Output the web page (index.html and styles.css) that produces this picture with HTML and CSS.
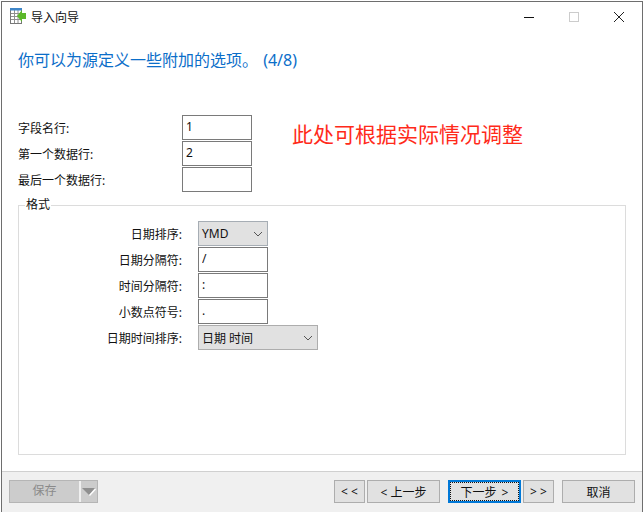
FILE: index.html
```html
<!DOCTYPE html>
<html lang="zh">
<head>
    <meta charset="UTF-8">
    <meta name="viewport" content="width=device-width, initial-scale=1.0">
    <title>导入向导</title>
    <link rel="stylesheet" href="styles.css">
</head>
<body>
    <div class="window">
        <div class="titlebar">
            <svg class="app-icon" width="17" height="17" viewBox="0 0 17 17">
                <rect x="0.5" y="0.5" width="11" height="15" fill="#fff" stroke="#777"/>
                <path d="M1 5.500H11M1 8.500H11M1 11.500H11M4.500 2V15M8 2V15" stroke="#8f8f8f" fill="none"/>
                <path d="M0 0H12V2.500H0Z" fill="#3f86c8"/>
                <path d="M7 8L12 2V5H16V11H12V14Z" fill="#5cb82a"/>
            </svg>
            <span class="title-text">导入向导</span>
            <div class="window-controls">
                <svg width="10" height="10" viewBox="0 0 10 10"><path d="M0 5.500H10" stroke="#111"/></svg>
                <svg width="10" height="10" viewBox="0 0 10 10"><rect x="0.500" y="0.500" width="9" height="9" fill="none" stroke="#ccc"/></svg>
                <svg width="10" height="10" viewBox="0 0 10 10"><path d="M0 0L10 10M10 0L0 10" stroke="#222"/></svg>
            </div>
        </div>

        <div class="content">
            <h1 class="heading">你可以为源定义一些附加的选项。 (4/8)</h1>

            <div class="source-rows">
                <div class="source-fields">
                    <label class="field-label">字段名行:</label>
                    <input class="text-input" type="text" value="1">
                    <label class="field-label">第一个数据行:</label>
                    <input class="text-input" type="text" value="2">
                    <label class="field-label">最后一个数据行:</label>
                    <input class="text-input" type="text" value="">
                </div>
                <p class="note">此处可根据实际情况调整</p>
            </div>

            <fieldset class="format-group">
                <legend>格式</legend>
                <div class="format-fields">
                    <label class="field-label">日期排序:</label>
                    <div class="combo">
                        <span>YMD</span>
                        <svg width="10" height="6" viewBox="0 0 10 6"><path d="M1 1L5 5L9 1" fill="none" stroke="#555"/></svg>
                    </div>
                    <label class="field-label">日期分隔符:</label>
                    <input class="text-input" type="text" value="/">
                    <label class="field-label">时间分隔符:</label>
                    <input class="text-input" type="text" value=":">
                    <label class="field-label">小数点符号:</label>
                    <input class="text-input" type="text" value=".">
                    <label class="field-label">日期时间排序:</label>
                    <div class="combo combo-wide">
                        <span>日期 时间</span>
                        <svg width="10" height="6" viewBox="0 0 10 6"><path d="M1 1L5 5L9 1" fill="none" stroke="#555"/></svg>
                    </div>
                </div>
            </fieldset>
        </div>

        <div class="footer">
            <div class="save-button">
                <span class="save-text">保存</span>
                <svg class="save-arrow" width="16" height="21" viewBox="0 0 16 21">
                    <path d="M1 7H14L8 14Z" fill="#8f8f8f"/>
                    <path d="M8.500 14.500L14.500 8" stroke="#fff" stroke-width="1.300"/>
                </svg>
            </div>
            <div class="nav-buttons">
                <button class="btn btn-small">&lt; &lt;</button>
                <button class="btn">&lt; 上一步</button>
                <button class="btn btn-default">下一步 &gt;</button>
                <button class="btn btn-small">&gt; &gt;</button>
                <button class="btn btn-cancel">取消</button>
            </div>
        </div>
    </div>
</body>
</html>
```

FILE: styles.css
```css
html, body {
    height: 100%;
    margin: 0;
    background: #fff;
}

body {
    font-family: "Noto Sans", "Noto Sans CJK SC", sans-serif;
    font-size: 12px;
    color: #111;
}

.window {
    height: 511px;
    box-sizing: border-box;
    margin: 1px 0 0 1px;
    border: 1px solid #6e6e6e;
    border-bottom: 0;
    display: flex;
    flex-direction: column;
}

.titlebar {
    height: 29px;
    display: flex;
    align-items: center;
    padding-left: 8px;
}

.app-icon {
    margin-right: 4px;
}

.window-controls {
    margin-left: auto;
    display: flex;
    gap: 35px;
    padding-right: 18px;
}

.content {
    flex: 1;
    padding: 0 16px 0 16px;
    display: flex;
    flex-direction: column;
}

.heading {
    margin: 17px 0 0;
    height: 24px;
    line-height: 24px;
    font-size: 16px;
    font-weight: normal;
    word-spacing: 1px;
    color: #0b6ec9;
}

.source-rows {
    display: flex;
    margin-top: 43px;
}

.source-fields {
    display: grid;
    grid-template-columns: 164px 70px;
    grid-auto-rows: 25px;
    row-gap: 1px;
}

.field-label {
    display: flex;
    align-items: center;
    padding-top: 1px;
    color: #111;
}

.text-input {
    box-sizing: border-box;
    width: 70px;
    height: 25px;
    margin: 0;
    padding: 0 3px 2px;
    border: 1px solid #7a7a7a;
    border-radius: 0;
    background: #fff;
    font-family: "Noto Sans", "Noto Sans CJK SC", sans-serif;
    font-size: 12px;
    color: #111;
    outline: none;
}

.note {
    margin: 6px 0 0 40px;
    height: 26px;
    line-height: 26px;
    font-size: 21px;
    color: #ff2a1a;
}

.format-group {
    margin: 6px 0 0;
    padding: 0;
    height: 257px;
    box-sizing: border-box;
    border: 1px solid #dcdcdc;
    min-width: 0;
}

.format-group legend {
    margin-left: 6px;
    padding: 0 1px;
    font-size: 12px;
    line-height: 14px;
}

.format-fields {
    display: grid;
    grid-template-columns: 164px auto;
    justify-content: start;
    justify-items: start;
    grid-auto-rows: 25px;
    row-gap: 1px;
    margin: 9px 0 0 15px;
}

.format-fields .field-label {
    justify-self: end;
    margin-right: 16px;
}

.combo {
    box-sizing: border-box;
    width: 70px;
    height: 25px;
    border: 1px solid #a6adb4;
    background: #e1e1e1;
    display: flex;
    align-items: center;
    justify-content: space-between;
    padding: 0 3px;
    font-size: 12px;
}

.combo svg {
    margin-right: 1px;
}

.combo-wide {
    width: 120px;
    border-color: #adadad;
}

.footer {
    box-sizing: border-box;
    height: 41px;
    border-top: 1px solid #d0d0d0;
    background: #f0f0f0;
    display: flex;
    align-items: flex-start;
    padding: 8px 7px 0 7px;
}

.save-button {
    box-sizing: border-box;
    width: 89px;
    height: 23px;
    border: 1px solid #b5b5b5;
    background: #cccccc;
    display: flex;
    align-items: center;
}

.save-text {
    flex: 1;
    text-align: center;
    color: #8a8a8a;
    font-size: 12px;
    border-right: 2px solid #f0f0f0;
    height: 21px;
    line-height: 20px;
}

.nav-buttons {
    margin-left: auto;
    display: flex;
}

.btn {
    box-sizing: border-box;
    width: 73px;
    height: 23px;
    margin: 0 0 0 2px;
    padding: 0;
    border: 1px solid #adadad;
    border-radius: 0;
    background: #e1e1e1;
    font-family: "Noto Sans", "Noto Sans CJK SC", sans-serif;
    font-size: 12px;
    color: #111;
}

.btn-small {
    width: 31px;
}

.btn-default {
    margin-left: 8px;
    border: 2px solid #0078d7;
    outline: 1px dotted #111;
    outline-offset: -3px;
    word-spacing: 2px;
}

.btn-cancel {
    margin-left: 8px;
}
```
